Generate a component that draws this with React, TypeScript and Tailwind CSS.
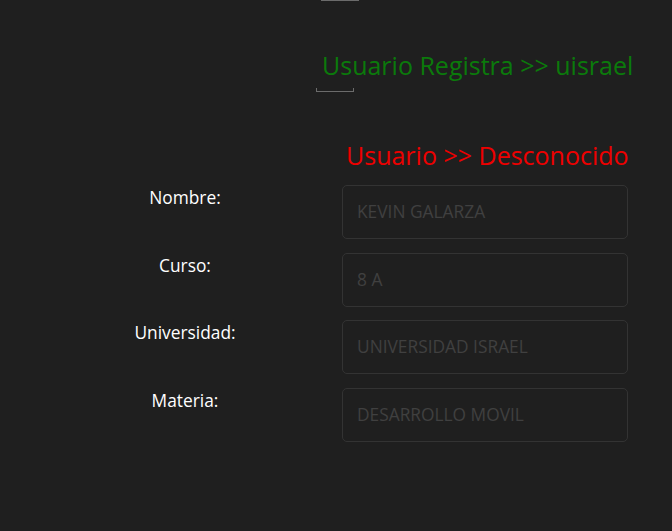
const font = { fontFamily: '"Open Sans", "Noto Sans", sans-serif' }

const fields = [
  { label: "Nombre:", value: "KEVIN GALARZA" },
  { label: "Curso:", value: "8 A" },
  { label: "Universidad:", value: "UNIVERSIDAD ISRAEL" },
  { label: "Materia:", value: "DESARROLLO MOVIL" },
]

export default function App() {
  return (
    <div
      className="w-[672px] h-[531px] bg-[#1f1f1f] overflow-hidden font-['Open_Sans',sans-serif]"
      style={font}
    >
      <div className="ml-[321px] w-[38px] h-px bg-[#6b6b6b]" />

      <div className="pl-[322px] pt-[48px]">
        <h2 className="text-[25px] leading-[32px] text-[#0b7a0b]">Usuario Registra &gt;&gt; uisrael</h2>
      </div>
      <div className="ml-[316px] mt-[7px] w-[38px] h-[4px] border-x border-b border-[#6b6b6b]" />

      <div className="pl-[346px] pt-[47px]">
        <h3 className="text-[25px] leading-[32px] text-[#ee0000]">Usuario &gt;&gt; Desconocido</h3>
      </div>

      <div className="mt-[14px] flex flex-col gap-[13.67px]">
        {fields.map((f) => (
          <div key={f.label} className="flex items-start">
            <div className="w-[170px] ml-[100px] text-center text-white text-[17.33px] leading-[22px] pt-[1px]">
              {f.label}
            </div>
            <div className="ml-[72px] w-[286px] h-[54px] rounded-[5px] border border-[#333333] flex items-center px-[14px]">
              <span className="text-[17.33px] text-[#404040]">{f.value}</span>
            </div>
          </div>
        ))}
      </div>
    </div>
  )
}
